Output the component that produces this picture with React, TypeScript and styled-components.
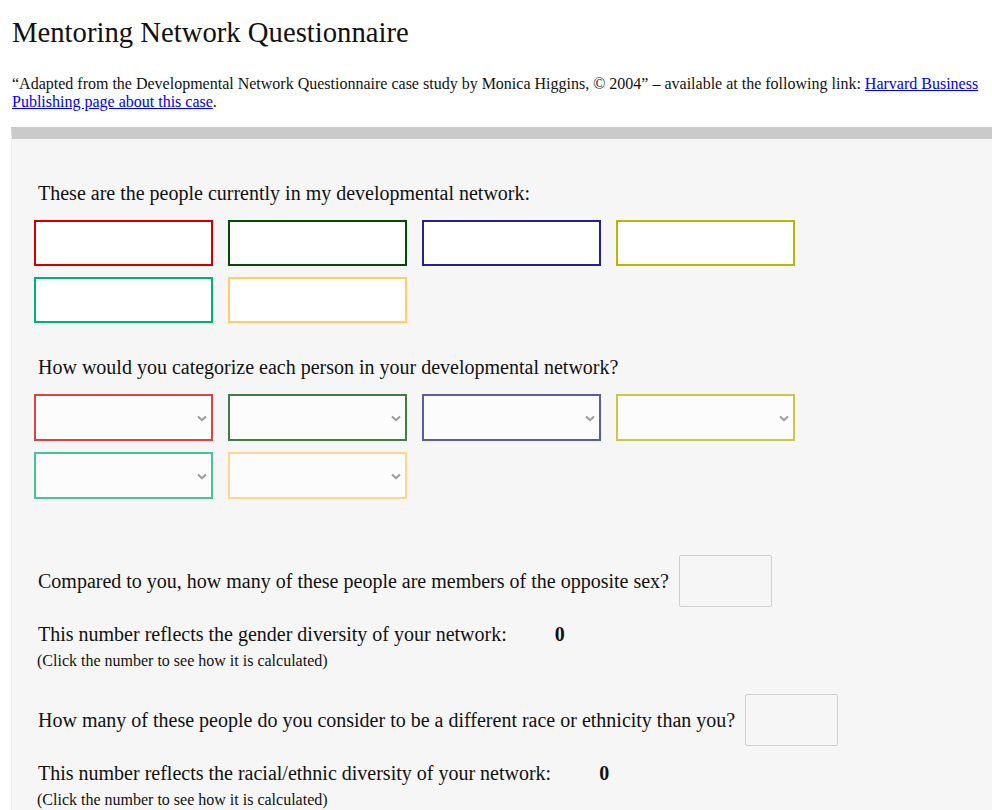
import React from "react";
import styled, { createGlobalStyle } from "styled-components";

const GlobalStyle = createGlobalStyle`
  html, body {
    margin: 0;
    padding: 0;
    background: #ffffff;
    color: #111;
    font-family: "Liberation Serif", "Times New Roman", serif;
  }
`;

const Page = styled.div`
  padding: 0 12px;
`;

const Title = styled.h1`
  font-size: 28.7px;
  font-weight: normal;
  margin: 0;
  padding-top: 15px;
  line-height: 34px;
`;

const Credit = styled.p`
  font-size: 16px;
  line-height: 18px;
  margin: 26px 0 0;

  a {
    color: #0000ee;
  }
`;

const Panel = styled.div`
  margin: 16px -12px 0 -1px;
  background: #f6f6f6;
  border-top: 12px solid #cacaca;
  border-left: 1px solid #ededed;
  padding: 43px 0 40px 22px;
`;

const Label = styled.div`
  font-size: 20px;
  line-height: 22px;
  margin-left: 4px;
`;

const Grid = styled.div<{ $top: number }>`
  display: grid;
  grid-template-columns: repeat(4, 179px);
  column-gap: 15px;
  row-gap: 11px;
  margin-top: ${(p) => p.$top}px;
`;

const NameInput = styled.input<{ $c: string }>`
  box-sizing: border-box;
  height: 46px;
  width: 100%;
  margin: 0;
  background: #fff;
  border: 2px solid ${(p) => p.$c};
  border-radius: 0;
  outline: none;
`;

const SelectBox = styled.div<{ $c: string }>`
  position: relative;
  box-sizing: border-box;
  height: 47px;
  background: #fff;
  border: 2px solid ${(p) => p.$c};
  opacity: 0.72;
`;

const Chevron = styled.svg`
  position: absolute;
  right: 4px;
  top: 19px;
`;

const QuestionRow = styled.div<{ $top: number }>`
  display: flex;
  align-items: center;
  margin-top: ${(p) => p.$top}px;
`;

const NumberBox = styled.input`
  box-sizing: border-box;
  width: 93px;
  height: 52px;
  margin: 0 0 0 10px;
  background: transparent;
  border: 1px solid #cfcfcf;
  border-radius: 2px;
  outline: none;
`;

const ScoreRow = styled.div`
  font-size: 20px;
  line-height: 22px;
  margin: 16px 0 0 4px;
`;

const Score = styled.b`
  margin-left: 48px;
  cursor: pointer;
`;

const Hint = styled.div`
  font-size: 16px;
  line-height: 18px;
  margin: 7px 0 0 3px;
`;

const nameColors = ["#cc0000", "#004d00", "#222288", "#b8b800", "#00b07a", "#ffcc66"];

function Select({ color }: { color: string }) {
  return (
    <SelectBox $c={color}>
      <Chevron width="10" height="7" viewBox="0 0 10 7">
        <path d="M1 1.5 L5 5.2 L9 1.5" fill="none" stroke="#777" strokeWidth="2" />
      </Chevron>
    </SelectBox>
  );
}

export default function App() {
  return (
    <Page>
      <GlobalStyle />
      <Title>Mentoring Network Questionnaire</Title>
      <Credit>
        “Adapted from the Developmental Network Questionnaire case study by Monica Higgins, © 2004” – available at the
        following link: <a href="#">Harvard Business Publishing page about this case</a>.
      </Credit>

      <Panel>
        <Label>These are the people currently in my developmental network:</Label>
        <Grid $top={16}>
          {nameColors.map((c) => (
            <NameInput key={c} $c={c} type="text" />
          ))}
        </Grid>

        <Label style={{ marginTop: 33 }}>How would you categorize each person in your developmental network?</Label>
        <Grid $top={16}>
          {nameColors.map((c) => (
            <Select key={c} color={c} />
          ))}
        </Grid>

        <QuestionRow $top={56}>
          <Label>Compared to you, how many of these people are members of the opposite sex?</Label>
          <NumberBox type="text" />
        </QuestionRow>
        <ScoreRow>
          This number reflects the gender diversity of your network:<Score>0</Score>
        </ScoreRow>
        <Hint>(Click the number to see how it is calculated)</Hint>

        <QuestionRow $top={24}>
          <Label>How many of these people do you consider to be a different race or ethnicity than you?</Label>
          <NumberBox type="text" />
        </QuestionRow>
        <ScoreRow>
          This number reflects the racial/ethnic diversity of your network:<Score>0</Score>
        </ScoreRow>
        <Hint>(Click the number to see how it is calculated)</Hint>
      </Panel>
    </Page>
  );
}
